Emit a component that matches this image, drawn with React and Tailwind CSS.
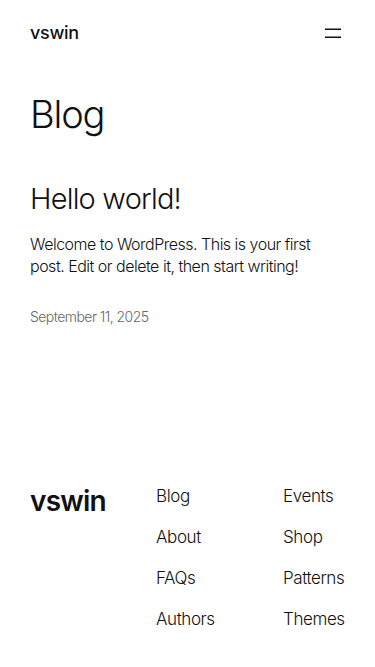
// Blog index page: header, single post excerpt, footer with two nav columns.

const navLeft = ['Blog', 'About', 'FAQs', 'Authors'];
const navRight = ['Events', 'Shop', 'Patterns', 'Themes'];

function MenuIcon() {
  return (
    <svg width="16" height="12" viewBox="0 0 16 12" aria-hidden="true">
      <rect x="0" y="1.5" width="16" height="1.5" fill="#111111" />
      <rect x="0" y="9.5" width="16" height="1.5" fill="#111111" />
    </svg>
  );
}

export default function App() {
  return (
    <div className="min-h-[667px] bg-white px-[30px] text-[#111111] font-['Inter',_'Liberation_Sans',_sans-serif]">
      <header className="flex h-[65px] items-center justify-between">
        <a className="text-[18px] font-medium tracking-[-0.3px]">vswin</a>
        <button className="mr-[4px] flex h-6 items-center" aria-label="Menu">
          <MenuIcon />
        </button>
      </header>

      <main>
        <h1 className="mt-[25px] text-[38px] font-light leading-[48px] tracking-[-1.2px]">Blog</h1>

        <article>
          <h2 className="mt-[43px] text-[29px] font-light leading-[36px] tracking-[-0.8px]">Hello world!</h2>
          <p className="mt-[16px] text-[16px] font-light leading-[22px] tracking-[-0.5px]">
            Welcome to WordPress. This is your first post. Edit or delete it, then start writing!
          </p>
          <p className="mt-[30px] text-[14px] font-light leading-[20px] tracking-[-0.55px] text-[#666666]">
            September 11, 2025
          </p>
        </article>
      </main>

      <footer className="mt-[157px] flex items-start">
        <div className="w-[126px] text-[28px] font-semibold leading-[34px] tracking-[-0.8px]">vswin</div>
        <div className="flex">
          <ul className="flex w-[127px] flex-col gap-[17px]">
            {navLeft.map((item) => (
              <li key={item} className="text-[17px] font-light leading-[24px] tracking-[-0.4px]">{item}</li>
            ))}
          </ul>
          <ul className="flex flex-col gap-[17px]">
            {navRight.map((item) => (
              <li key={item} className="text-[17px] font-light leading-[24px] tracking-[-0.4px]">{item}</li>
            ))}
          </ul>
        </div>
      </footer>
    </div>
  );
}
